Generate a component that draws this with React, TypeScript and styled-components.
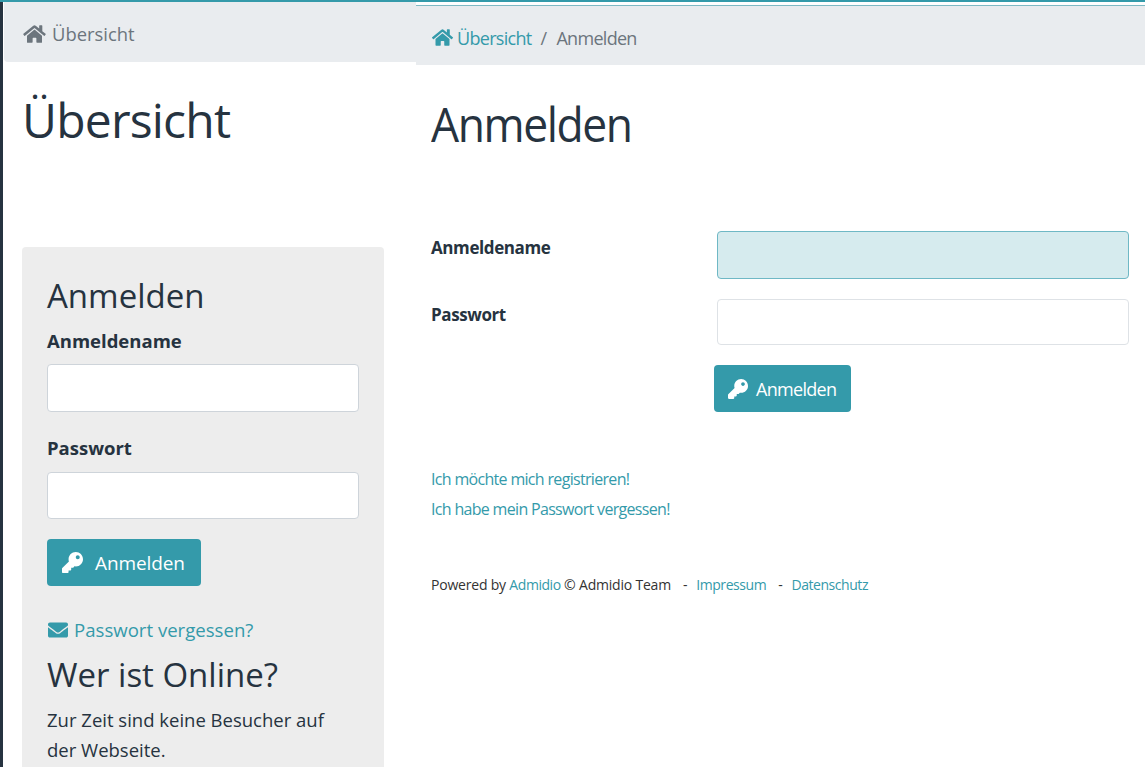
import React from 'react';
import styled, { createGlobalStyle } from 'styled-components';
import { FaEnvelope, FaHome, FaKey } from 'react-icons/fa';

const teal = '#349aaa';
const ink = '#263340';

const GlobalStyle = createGlobalStyle`
  html, body {
    margin: 0;
    padding: 0;
    background: #fff;
    overflow: hidden;
  }
  body {
    font-family: "Open Sans", "Noto Sans", sans-serif;
    color: ${ink};
  }
`;

const Page = styled.div`
  width: 1145px;
  height: 767px;
  overflow: hidden;
  display: grid;
  grid-template-columns: 416px 1fr;
  border-top: 2px solid ${teal};
  box-sizing: border-box;
`;

const LeftPane = styled.section`
  border-left: 3px solid ${ink};
  padding-left: 1px;
  min-width: 0;
`;

const LeftCrumbs = styled.div`
  height: 60px;
  box-sizing: border-box;
  padding: 3px 0 0 19px;
  background: #e9ecef;
  border-bottom-left-radius: 4px;
  display: flex;
  align-items: center;
  gap: 6px;
  font-size: 18.4px;
  color: #6c757d;
  svg {
    width: 23px;
    height: 20px;
  }
`;

const LeftTitle = styled.h1`
  margin: 26px 0 0 18px;
  font-size: 48px;
  line-height: 64px;
  font-weight: 400;
  letter-spacing: -0.8px;
`;

const Sidebar = styled.aside`
  margin: 95px 32px 0 18px;
  height: 560px;
  padding: 27px 25px 0;
  background: #ededed;
  border-radius: 4px 4px 0 0;
`;

const SideHeading = styled.h2`
  margin: 0;
  font-size: 33px;
  line-height: 44px;
  font-weight: 400;
`;

const SideLabel = styled.label`
  display: block;
  margin-top: 11px;
  font-size: 18.5px;
  line-height: 24px;
  font-weight: 700;
`;

const SideInput = styled.input<{ $last?: boolean }>`
  display: block;
  box-sizing: border-box;
  width: 312px;
  height: ${p => (p.$last ? 47 : 48)}px;
  margin: ${p => (p.$last ? '12px 0 20px' : '11px 0 24px')};
  background: #fff;
  border: 1px solid #ced4da;
  border-radius: 4px;
`;

const SideButton = styled.button`
  display: flex;
  align-items: center;
  gap: 12px;
  height: 47px;
  padding: 0 16px 0 15px;
  border: 0;
  border-radius: 4px;
  background: ${teal};
  color: #fff;
  font: 400 19px "Open Sans", sans-serif;
  letter-spacing: -0.1px;
  svg {
    width: 21px;
    height: 21px;
  }
`;

const MailLink = styled.a`
  display: flex;
  align-items: center;
  gap: 5px;
  margin-top: 31px;
  color: ${teal};
  font-size: 18.6px;
  line-height: 26px;
  svg {
    width: 22px;
    height: 20px;
  }
`;

const OnlineHeading = styled.h2`
  margin: 9px 0 0;
  font-size: 33px;
  line-height: 46px;
  font-weight: 400;
`;

const OnlineText = styled.p`
  margin: 7px 0 0;
  max-width: 300px;
  font-size: 18.5px;
  line-height: 30px;
`;

const RightPane = styled.section`
  min-width: 0;
  padding-top: 3px;
`;

const RightCrumbs = styled.nav`
  height: 60px;
  box-sizing: border-box;
  padding: 4px 0 0 16px;
  border-top: 1px solid #7fb9c4;
  background: #e9ecef;
  display: flex;
  align-items: center;
  font-size: 18px;
  letter-spacing: -0.7px;
  color: #6c757d;
  a {
    display: flex;
    align-items: center;
    gap: 4px;
    color: ${teal};
  }
  svg {
    width: 21px;
    height: 19px;
  }
`;

const Slash = styled.span`
  margin: 0 10px 0 9px;
`;

const RightBody = styled.div`
  padding: 0 16px 0 15px;
`;

const RightTitle = styled.h1`
  margin: 28px 0 0;
  font-size: 47px;
  line-height: 62px;
  font-weight: 400;
  letter-spacing: -1.5px;
  transform: scaleX(0.945);
  transform-origin: left center;
`;

const FormRow = styled.div<{ $first?: boolean }>`
  display: grid;
  grid-template-columns: 286px 1fr;
  margin-top: ${p => (p.$first ? 76 : 0)}px;
  margin-bottom: 20px;
`;

const FormLabel = styled.label<{ $first?: boolean }>`
  font-size: 17px;
  line-height: ${p => (p.$first ? 34 : 32)}px;
  font-weight: 700;
  letter-spacing: -0.4px;
`;

const FormInput = styled.input<{ $focused?: boolean }>`
  box-sizing: border-box;
  width: 412px;
  height: ${p => (p.$focused ? 48 : 46)}px;
  border: 1px solid ${p => (p.$focused ? '#6fb8c5' : '#dee2e6')};
  border-radius: 4px;
  background: ${p => (p.$focused ? '#d6ebee' : '#fff')};
`;

const FormButton = styled.button`
  display: flex;
  align-items: center;
  gap: 8px;
  height: 47px;
  padding: 0 15px 0 14px;
  margin-left: 283px;
  border: 0;
  border-radius: 4px;
  background: ${teal};
  color: #fff;
  font: 400 18px "Open Sans", sans-serif;
  letter-spacing: -0.7px;
  svg {
    width: 20px;
    height: 20px;
  }
`;

const RegisterLinks = styled.div`
  margin-top: 56px;
  display: flex;
  flex-direction: column;
  gap: 8px;
  font-size: 16px;
  line-height: 22px;
  letter-spacing: -0.68px;
  color: ${teal};
`;

const Footer = styled.footer`
  margin-top: 55px;
  font-size: 14px;
  line-height: 20px;
  letter-spacing: -0.2px;
  color: #333;
  a {
    color: ${teal};
    letter-spacing: -0.45px;
  }
`;

const Separator = styled.span`
  margin: 0 9px 0 12px;
`;

export default function App() {
  return (
    <>
      <GlobalStyle />
      <Page>
        <LeftPane>
          <LeftCrumbs>
            <FaHome />
            Übersicht
          </LeftCrumbs>
          <LeftTitle>Übersicht</LeftTitle>
          <Sidebar>
            <SideHeading>Anmelden</SideHeading>
            <SideLabel>Anmeldename</SideLabel>
            <SideInput />
            <SideLabel>Passwort</SideLabel>
            <SideInput $last />
            <SideButton>
              <FaKey />
              Anmelden
            </SideButton>
            <MailLink>
              <FaEnvelope />
              Passwort vergessen?
            </MailLink>
            <OnlineHeading>Wer ist Online?</OnlineHeading>
            <OnlineText>Zur Zeit sind keine Besucher auf der Webseite.</OnlineText>
          </Sidebar>
        </LeftPane>
        <RightPane>
          <RightCrumbs>
            <a>
              <FaHome />
              Übersicht
            </a>
            <Slash>/</Slash>
            Anmelden
          </RightCrumbs>
          <RightBody>
            <RightTitle>Anmelden</RightTitle>
            <FormRow $first>
              <FormLabel $first>Anmeldename</FormLabel>
              <FormInput $focused />
            </FormRow>
            <FormRow>
              <FormLabel>Passwort</FormLabel>
              <FormInput />
            </FormRow>
            <FormButton>
              <FaKey />
              Anmelden
            </FormButton>
            <RegisterLinks>
              <a>Ich möchte mich registrieren!</a>
              <a>Ich habe mein Passwort vergessen!</a>
            </RegisterLinks>
            <Footer>
              Powered by <a>Admidio</a> © Admidio Team
              <Separator>-</Separator>
              <a>Impressum</a>
              <Separator>-</Separator>
              <a>Datenschutz</a>
            </Footer>
          </RightBody>
        </RightPane>
      </Page>
    </>
  );
}
